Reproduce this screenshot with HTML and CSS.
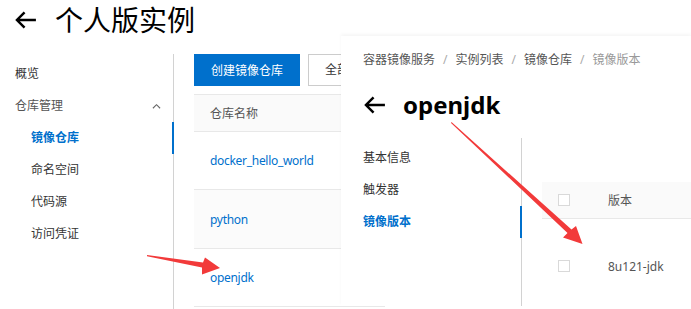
FILE: index.html
```html
<!DOCTYPE html>
<html lang="zh">
<head>
    <meta charset="UTF-8">
    <meta name="viewport" content="width=device-width, initial-scale=1.0">
    <title>个人版实例</title>
    <link rel="stylesheet" href="styles.css">
</head>
<body>
    <!-- 底层：实例页面 -->
    <div class="page">
        <header class="page-head">
            <svg class="back" viewBox="0 0 24 19"><path d="M23 9.5H3M11 1.5L3 9.5l8 8" fill="none" stroke="#000" stroke-width="2.6"/></svg>
            <h1>个人版实例</h1>
        </header>
        <div class="layout">
            <nav class="side">
                <a class="nav-item">概览</a>
                <a class="nav-item group">仓库管理
                    <svg class="caret" viewBox="0 0 10 6"><path d="M1 5.5L5 1.5l4 4" fill="none" stroke="#666" stroke-width="1.2"/></svg>
                </a>
                <a class="nav-item sub active">镜像仓库</a>
                <a class="nav-item sub">命名空间</a>
                <a class="nav-item sub">代码源</a>
                <a class="nav-item sub">访问凭证</a>
            </nav>
            <main class="content">
                <div class="toolbar">
                    <button class="btn-primary">创建镜像仓库</button>
                    <div class="select">全部</div>
                </div>
                <div class="repo-table">
                    <div class="row head">仓库名称</div>
                    <div class="row"><a>docker_hello_world</a></div>
                    <div class="row hover"><a>python</a></div>
                    <div class="row"><a>openjdk</a></div>
                </div>
            </main>
        </div>
    </div>

    <!-- 叠加截图：镜像版本 -->
    <section class="shot">
        <div class="crumbs">
            <span>容器镜像服务</span><span class="sep">/</span><span>实例列表</span><span class="sep">/</span><span>镜像仓库</span><span class="sep">/</span><span class="cur">镜像版本</span>
        </div>
        <div class="shot-title">
            <svg class="back" viewBox="0 0 24 19"><path d="M23 9.5H3M11 1.5L3 9.5l8 8" fill="none" stroke="#000" stroke-width="2.6"/></svg>
            <h2>openjdk</h2>
        </div>
        <div class="shot-body">
            <nav class="shot-side">
                <a class="nav-item">基本信息</a>
                <a class="nav-item">触发器</a>
                <a class="nav-item active">镜像版本</a>
            </nav>
            <div class="shot-main">
                <div class="ver-head"><span class="check"></span>版本</div>
                <div class="ver-row"><span class="check"></span>8u121-jdk</div>
            </div>
        </div>
    </section>

    <!-- 红色标注箭头 -->
    <svg class="marks" viewBox="0 0 691 309">
        <polygon points="147,255 203,262.5 205,257.5 220,268 202,274.5 202,267.5 147,256.2" fill="#f23a3a"/>
        <polygon points="451.5,122 571.5,229.5 576,226 582.5,244 563,237.5 567.5,233 451,123" fill="#f23a3a"/>
    </svg>
</body>
</html>
```

FILE: styles.css
```css
body {
    margin: 0;
    width: 691px;
    height: 309px;
    overflow: hidden;
    position: relative;
    font-family: "Noto Sans", "Noto Sans CJK SC", sans-serif;
    font-size: 12px;
    color: #333;
    background: #fff;
}
a {
    color: inherit;
    text-decoration: none;
}
.back {
    width: 23px;
    height: 18px;
    flex: none;
}

/* 底层页面 */
.page-head {
    display: flex;
    align-items: center;
    height: 40px;
    padding-left: 14px;
    margin-bottom: 14px;
}
.page-head h1 {
    margin: 0 0 0 18px;
    font-size: 28px;
    font-weight: 400;
    line-height: 40px;
    color: #000;
}
.layout {
    display: flex;
    height: 255px;
}
.side {
    width: 173px;
    border-right: 1px solid #d2d2d2;
    padding-top: 4px;
}
.nav-item {
    display: block;
    line-height: 32px;
    padding-left: 15px;
    color: #333;
}
.nav-item.group {
    display: flex;
    justify-content: space-between;
    align-items: center;
    padding-right: 12px;
    color: #555;
}
.nav-item.sub {
    padding-left: 31px;
}
.nav-item.active {
    color: #0070cc;
    font-weight: bold;
    margin-right: -1px;
    border-right: 2px solid #0070cc;
}
.caret {
    width: 9px;
    height: 6px;
}
.content {
    padding-left: 20px;
}
.toolbar {
    display: flex;
    gap: 8px;
    height: 32px;
}
.btn-primary {
    width: 106px;
    height: 32px;
    border: 0;
    background: #0070cc;
    color: #fff;
    font: inherit;
}
.select {
    width: 120px;
    border: 1px solid #ccc;
    padding-left: 16px;
    line-height: 30px;
    color: #333;
}
.repo-table {
    width: 191px;
    margin-top: 8px;
}
.row {
    display: flex;
    align-items: center;
    height: 57px;
    padding-left: 16px;
    border-bottom: 1px solid #e8e8e8;
    color: #0070cc;
    letter-spacing: -0.3px;
}
.row.head {
    height: 36px;
    border-top: 1px solid #e8e8e8;
    background: #fafafa;
    color: #555;
    letter-spacing: 0;
}
.row.hover {
    height: 58px;
    background: #fbfbfb;
}

/* 叠加截图 */
.shot {
    position: absolute;
    left: 341px;
    top: 36px;
    right: 0;
    bottom: 3px;
    display: flex;
    flex-direction: column;
    background: #fff;
    box-shadow: 0 -2px 3px rgba(0, 0, 0, 0.04);
}
.crumbs {
    padding: 14px 0 0 22px;
    line-height: 20px;
    color: #555;
}
.crumbs .sep {
    margin: 0 8px;
    color: #aaa;
}
.crumbs .cur {
    color: #999;
}
.shot-title {
    display: flex;
    align-items: center;
    height: 32px;
    margin-top: 19px;
    padding-left: 22px;
}
.shot-title h2 {
    margin: 0 0 0 17px;
    font-size: 24px;
    font-weight: 700;
    line-height: 32px;
    color: #000;
}
.shot-body {
    display: flex;
    flex: 1;
    margin-top: 17px;
}
.shot-side {
    width: 180px;
    border-right: 1px solid #d2d2d2;
    padding-top: 4px;
}
.shot-side .nav-item {
    padding-left: 22px;
}
.shot-main {
    flex: 1;
    padding: 44px 0 0 20px;
}
.ver-head {
    display: flex;
    align-items: center;
    height: 36px;
    padding-left: 16px;
    background: #fafafa;
    border-bottom: 1px solid #e8e8e8;
    color: #555;
}
.ver-row {
    display: flex;
    align-items: center;
    height: 20px;
    padding: 37px 0 0 16px;
    color: #555;
}
.check {
    width: 12px;
    height: 12px;
    box-sizing: border-box;
    border: 1px solid #d9d9d9;
    background: #fff;
    margin-right: 38px;
}

/* 标注箭头 */
.marks {
    position: absolute;
    left: 0;
    top: 0;
    width: 691px;
    height: 309px;
    pointer-events: none;
}
```
